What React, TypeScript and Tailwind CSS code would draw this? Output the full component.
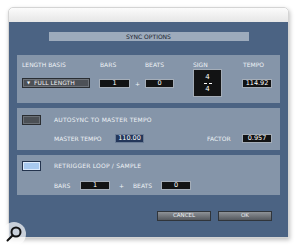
import React from 'react'

const font = "font-['DejaVu_Sans',sans-serif]"

const Label: React.FC<{ children: React.ReactNode; className?: string }> = ({ children, className = '' }) => (
  <span className={`text-[6px] leading-[8px] text-[#eef2f6] whitespace-nowrap ${className}`}>{children}</span>
)

const NumBox: React.FC<{ value: string; w: string; dark?: boolean }> = ({ value, w, dark }) => (
  <div
    className={`${w} h-[9px] flex items-center justify-center text-[6.5px] leading-none text-white border ${dark ? 'bg-[#24375a] border-[#6b7d96]' : 'bg-[#121314] border-[#a4adb8]'}`}
  >
    {value}
  </div>
)

const Toggle: React.FC<{ on?: boolean }> = ({ on }) => (
  <div
    className={`w-[19px] h-[10px] border ${on ? 'bg-[#a8c9ef] border-[#24344e] shadow-[inset_0_0_0_1px_#dbe9fb]' : 'bg-[#4c5055] border-[#2a2d31] shadow-[inset_0_0_0_1px_#6b7076]'}`}
  />
)

const Button: React.FC<{ label: string }> = ({ label }) => (
  <button className="w-[54px] h-[10px] border border-[#30353b] bg-gradient-to-b from-[#8e9297] to-[#55595f] text-[5.5px] leading-none text-[#eceff2] flex items-center justify-center">
    {label}
  </button>
)

const App: React.FC = () => {
  return (
    <div className={`w-[300px] h-[248px] bg-white relative pt-[7px] pl-[8px] overflow-hidden ${font}`}>
      <div className="w-[281px] flex flex-col rounded-t-[5px] border border-[#d4d4d4] shadow-[1px_2px_4px_rgba(0,0,0,0.25)]">
        <div className="h-[14px] rounded-t-[5px] bg-gradient-to-b from-[#fbfbfb] to-[#e6e6e6]" />
        <div className="h-[215px] bg-[#4b6383] flex flex-col px-[8px]">
          <div className="mt-[10px] mx-auto w-[200px] h-[9px] bg-[#9dabbc] flex items-center justify-center">
            <span className="text-[6px] leading-none text-[#17202b]">SYNC OPTIONS</span>
          </div>

          {/* length / bars / beats / sign / tempo */}
          <div className="mt-[14px] h-[48px] bg-[#8595a9] flex pl-[5px] pt-[6px]">
            <div className="flex flex-col w-[68px]">
              <Label className="h-[8px]">LENGTH BASIS</Label>
              <div className="h-[28px] flex items-center">
                <div className="w-[68px] h-[10px] bg-[#4d5157] border border-[#2a2e33] shadow-[inset_0_0_0_1px_#6e737a] flex items-center pl-[4px] gap-[4px] text-[6px] leading-none text-[#eef1f4]">
                  <span className="text-[4px]">▼</span>
                  <span>FULL LENGTH</span>
                </div>
              </div>
            </div>
            <div className="flex flex-col w-[31px] ml-[9px]">
              <Label className="h-[8px] pl-[1px]">BARS</Label>
              <div className="h-[28px] flex items-center">
                <NumBox value="1" w="w-[31px]" />
              </div>
            </div>
            <div className="w-[15px] flex flex-col">
              <div className="h-[8px]" />
              <div className="h-[28px] flex items-center justify-center text-[6px] text-[#eef2f6]">+</div>
            </div>
            <div className="flex flex-col w-[29px]">
              <Label className="h-[8px]">BEATS</Label>
              <div className="h-[28px] flex items-center">
                <NumBox value="0" w="w-[29px]" />
              </div>
            </div>
            <div className="flex flex-col w-[29px] ml-[19px]">
              <Label className="h-[8px]">SIGN</Label>
              <div className="h-[28px] w-[29px] bg-[#121314] border border-[#a4adb8] flex flex-col items-center justify-center gap-[2px] text-white text-[7px] leading-[7px]">
                <span>4</span>
                <div className="w-[8px] h-[1px] bg-[linear-gradient(to_right,#fff_0_3px,transparent_3px_5px,#fff_5px_8px)]" />
                <span>4</span>
              </div>
            </div>
            <div className="flex flex-col w-[30px] ml-[20px]">
              <Label className="h-[8px] pl-[1px]">TEMPO</Label>
              <div className="h-[28px] flex items-center">
                <NumBox value="114.92" w="w-[30px]" />
              </div>
            </div>
          </div>

          {/* autosync */}
          <div className="mt-[5px] h-[42px] bg-[#8595a9] flex flex-col pl-[5px] pt-[7px]">
            <div className="h-[10px] flex items-center">
              <Toggle />
              <Label className="ml-[13px] tracking-[0.2px]">AUTOSYNC TO MASTER TEMPO</Label>
            </div>
            <div className="mt-[9px] h-[9px] flex items-center pl-[32px]">
              <Label className="w-[61px]">MASTER TEMPO</Label>
              <NumBox value="110.00" w="w-[29px]" dark />
              <Label className="ml-[63px] w-[35px]">FACTOR</Label>
              <NumBox value="0.957" w="w-[30px]" />
            </div>
          </div>

          {/* retrigger */}
          <div className="mt-[5px] h-[40px] bg-[#8595a9] flex flex-col pl-[5px] pt-[6px]">
            <div className="h-[10px] flex items-center">
              <Toggle on />
              <Label className="ml-[13px] tracking-[0.2px]">RETRIGGER LOOP / SAMPLE</Label>
            </div>
            <div className="mt-[10px] h-[9px] flex items-center pl-[32px]">
              <Label className="w-[26px]">BARS</Label>
              <NumBox value="1" w="w-[30px]" />
              <span className="w-[23px] text-center text-[6px] text-[#eef2f6]">+</span>
              <Label className="w-[28px]">BEATS</Label>
              <NumBox value="0" w="w-[30px]" />
            </div>
          </div>

          <div className="mt-[16px] flex justify-end gap-[7px] pr-[8px]">
            <Button label="CANCEL" />
            <Button label="OK" />
          </div>
        </div>
      </div>

      {/* magnifier overlay */}
      <div className="absolute left-[2px] top-[222px] w-[24px] h-[24px] rounded-full bg-white/70 flex items-center justify-center">
        <svg width="18" height="18" viewBox="0 0 18 18" fill="none" stroke="#111" strokeWidth="2">
          <circle cx="11" cy="7" r="4.5" />
          <line x1="7.8" y1="10.2" x2="2.5" y2="15.5" strokeLinecap="round" />
        </svg>
      </div>
    </div>
  )
}

export default App
